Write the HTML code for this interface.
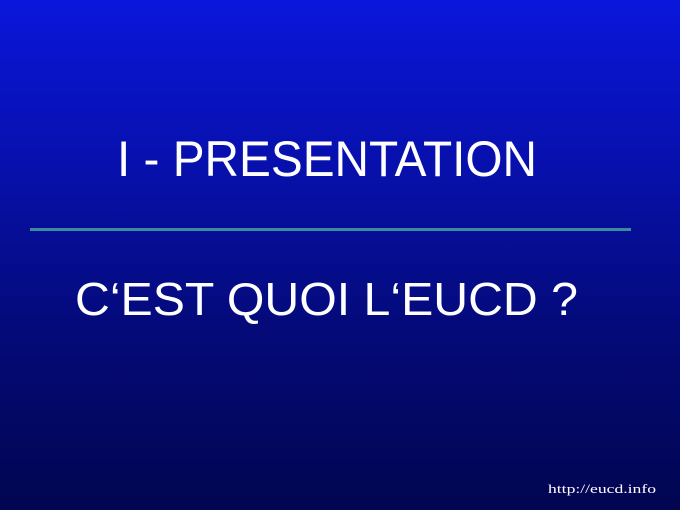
<!DOCTYPE html>
<html><head><style>
html,body{margin:0;padding:0;}
body{width:680px;height:510px;overflow:hidden;background:linear-gradient(#0a16dc 0%,#0710a8 35%,#040a78 65%,#020550 100%);}
</style></head><body>
<svg width="680" height="510" style="position:absolute;left:0;top:0">
<text x="117" y="176" font-family="Liberation Sans, sans-serif" font-size="50" fill="#fff" textLength="420" lengthAdjust="spacingAndGlyphs">I - PRESENTATION</text>
<rect x="30" y="228" width="601" height="3" fill="#3a8c9c"/>
<text x="75" y="315" font-family="Liberation Sans, sans-serif" font-size="46" fill="#fff" textLength="503" lengthAdjust="spacingAndGlyphs">C‘EST QUOI L‘EUCD ?</text>
<text x="548" y="493" font-family="Liberation Serif, serif" font-size="13" fill="#fff" textLength="108" lengthAdjust="spacingAndGlyphs">http://eucd.info</text>
</svg>
</body></html>
